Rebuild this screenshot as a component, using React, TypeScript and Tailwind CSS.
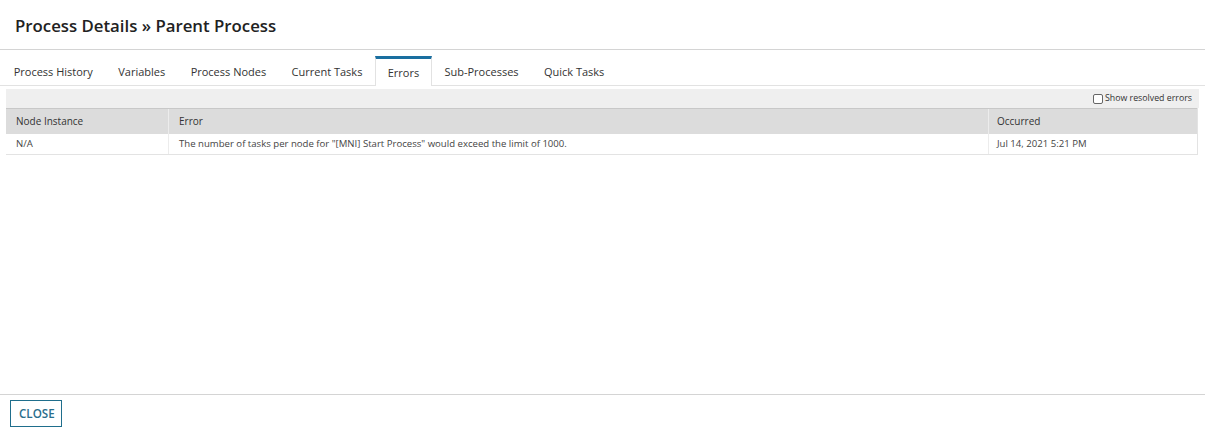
import React from "react";

const tabs = [
  "Process History",
  "Variables",
  "Process Nodes",
  "Current Tasks",
  "Errors",
  "Sub-Processes",
  "Quick Tasks",
];

export default function App() {
  return (
    <div
      className="flex h-[434px] w-full flex-col bg-white text-[#333]"
      style={{ fontFamily: '"Open Sans", "Noto Sans", sans-serif' }}
    >
      {/* Title bar */}
      <div className="flex h-[50px] shrink-0 items-center border-b border-[#d4d4d4] px-[15px] pt-[3px]">
        <h1 className="text-[16.8px] font-semibold leading-none text-[#222]">
          Process Details » Parent Process
        </h1>
      </div>

      {/* Tabs */}
      <div className="flex h-[36px] shrink-0 items-end border-b border-[#e2e2e2] pl-[1px]">
        {tabs.map((t) => {
          const active = t === "Errors";
          return (
            <div
              key={t}
              className={
                active
                  ? "relative -mb-px flex h-[30px] items-center border-x border-t-[3px] border-x-[#e2e2e2] border-t-[#1a6fa0] bg-white px-[11.6px] pt-[1px] text-[11px]"
                  : "flex h-[30px] items-center border-t-[3px] border-transparent px-[12.7px] pt-[1px] text-[11px]"
              }
            >
              {t}
            </div>
          );
        })}
      </div>

      {/* Errors panel */}
      <div className="flex-1 px-[6px] pt-[3px]">
        <div className="flex h-[19px] items-center justify-end bg-[#efefef] pr-[7px]">
          <label className="flex items-center gap-[2px] text-[8.8px] text-[#333]">
            <span className="inline-block h-[10px] w-[10px] rounded-[2px] border border-[#666] bg-white" />
            Show resolved errors
          </label>
        </div>
        <div className="mr-[1px] border-b border-r border-[#e3e3e3]">
          <div className="flex h-[26px] items-center border-t border-[#c8c8c8] bg-[#dcdcdc] text-[10px] text-[#333]">
            <div className="flex h-full w-[163px] items-center border-r border-[#ececec] pl-[10px]">
              Node Instance
            </div>
            <div className="flex h-full w-[820px] items-center border-r border-[#ececec] pl-[10px]">
              Error
            </div>
            <div className="flex h-full flex-1 items-center pl-[8px]">Occurred</div>
          </div>
          <div className="flex h-[20px] items-center bg-white text-[9.6px] text-[#444]">
            <div className="flex h-full w-[163px] items-center border-r border-[#ececec] pl-[10px]">
              N/A
            </div>
            <div className="flex h-full w-[820px] items-center border-r border-[#ececec] pl-[10px]">
              The number of tasks per node for "[MNI] Start Process" would exceed the limit of 1000.
            </div>
            <div className="flex h-full flex-1 items-center pl-[8px]">Jul 14, 2021 5:21 PM</div>
          </div>
        </div>
      </div>

      {/* Footer */}
      <div className="flex h-[40px] shrink-0 items-start border-t border-[#d4d4d4] px-[10px] pt-[5px]">
        <button className="flex h-[27px] items-center border border-[#1f6e8c] bg-white pl-[8px] pr-[6px] pt-[1px] text-[11.6px] font-semibold text-[#2a6e8c]">
          CLOSE
        </button>
      </div>
    </div>
  );
}
